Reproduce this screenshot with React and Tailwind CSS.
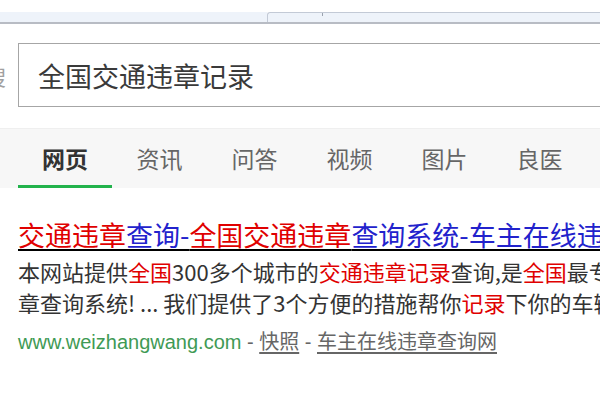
import React from "react";

const cjk = "font-['Microsoft_YaHei','Noto_Sans_CJK_SC',sans-serif]";

const tabs = ["网页", "资讯", "问答", "视频", "图片", "良医"];

const Red = ({ children }) => <span className="text-[#e00000]">{children}</span>;

export default function App() {
  return (
    <div className={`w-[600px] h-[400px] overflow-hidden bg-white ${cjk}`}>
      {/* top browser strip */}
      <div className="h-[12px]" />
      <div className="flex h-[12px] border-b-2 border-[#b8bcc4]">
        <div className="w-[267px] bg-[#eef3fa]" />
        <div className="flex-1 bg-[#eef3fa] border-t border-l border-[#c3cad6] rounded-tl-[3px]">
          <div className="ml-[54px] w-px h-[3px] bg-[#9aa2ae]" />
        </div>
      </div>

      {/* search box */}
      <div className="flex mt-[19px] h-[64px]">
        <div className="w-[6px] shrink-0 overflow-hidden flex justify-end items-center">
          <span className="text-[22px] text-[#a0a0a0] shrink-0">搜</span>
        </div>
        <div className="ml-[12px] w-[600px] shrink-0 border border-[#a6a6a6] flex items-center pl-[19px]">
          <span className="text-[27px] leading-none text-[#3a3a3a]">全国交通违章记录</span>
        </div>
      </div>

      {/* tabs */}
      <div className="mt-[21px] h-[60px] bg-[#f7f7f7] border-t border-[#efefef] flex pl-[18px]">
        {tabs.map((t, i) => (
          <div
            key={t}
            className={
              i === 0
                ? "w-[94px] shrink-0 flex items-center justify-center border-b-[3px] border-[#22b34c] pt-[3px] text-[23px] font-bold text-[#333333]"
                : "w-[95px] shrink-0 flex items-center justify-center pt-[3px] border-b-[3px] border-transparent text-[23px] text-[#666666]"
            }
          >
            {t}
          </div>
        ))}
      </div>

      {/* result */}
      <div className="pl-[18px] pt-[31px]">
        <div className="text-[27px] leading-[32px] whitespace-nowrap underline underline-offset-[3px]">
          <span className="text-[#e00000]">交通违章</span>
          <span className="text-[#2222cc]">查询-</span>
          <span className="text-[#e00000]">全国交通违章</span>
          <span className="text-[#2222cc]">查询系统-车主在线违章查询网</span>
        </div>
        <div className="mt-[5px] text-[22px] leading-[31px] text-[#333333] whitespace-nowrap">
          本网站提供<Red>全国</Red>300多个城市的<Red>交通违章记录</Red>查询,是<Red>全国</Red>最专业的违
        </div>
        <div className="text-[22px] leading-[31px] text-[#333333] whitespace-nowrap">
          章查询系统! ... 我们提供了3个方便的措施帮你<Red>记录</Red>下你的车辆信息
        </div>
        <div className="mt-[8px] text-[20px] leading-[32px] whitespace-nowrap text-[#666666] font-['Arial','Liberation_Sans','Noto_Sans_CJK_SC',sans-serif]">
          <span className="text-[#3f9a55]">www.weizhangwang.com</span>
          <span> - </span>
          <span className="underline underline-offset-[3px]">快照</span>
          <span> - </span>
          <span className="underline underline-offset-[3px]">车主在线违章查询网</span>
        </div>
      </div>
    </div>
  );
}
